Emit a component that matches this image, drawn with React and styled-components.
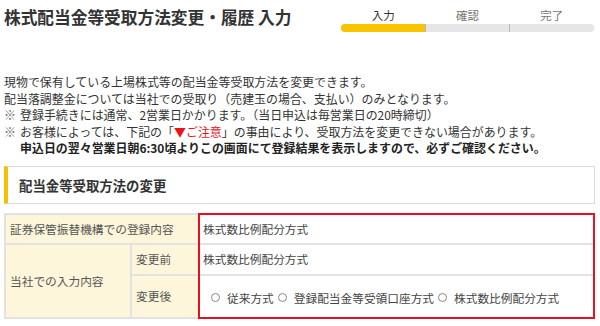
import styled, { createGlobalStyle } from "styled-components";

const GlobalStyle = createGlobalStyle`
    body{
        margin: 0;
        background: #fff;
        font-family: "Noto Sans CJK JP", "Noto Sans", sans-serif;
        color: #333;
    }
`

const steps = ["入力", "確認", "完了"];

const choices = ["従来方式", "登録配当金等受領口座方式", "株式数比例配分方式"];

export default function App(){
    return(
        <>
            <GlobalStyle />
            <Page>
                <Header>
                    <Title>株式配当金等受取方法変更・履歴 入力</Title>
                    <Steps>
                        <StepLabels>
                            {steps.map((s, i) => (
                                <StepLabel key={s} $current={i === 0}>{s}</StepLabel>
                            ))}
                        </StepLabels>
                        <StepBar>
                            {steps.map((s, i) => (
                                <StepSeg key={s} $done={i === 0} $first={i === 0} />
                            ))}
                        </StepBar>
                    </Steps>
                </Header>

                <Intro>
                    <Line>現物で保有している上場株式等の配当金等受取方法を変更できます。</Line>
                    <Line>配当落調整金については当社での受取り（売建玉の場合、支払い）のみとなります。</Line>
                    <Note>
                        <Mark>※</Mark>
                        <span>登録手続きには通常、2営業日かかります。（当日申込は毎営業日の20時締切）</span>
                    </Note>
                    <Note>
                        <Mark>※</Mark>
                        <span>お客様によっては、下記の「<Caution>▼ご注意</Caution>」の事由により、受取方法を変更できない場合があります。</span>
                    </Note>
                    <Strong>申込日の翌々営業日朝6:30頃よりこの画面にて登録結果を表示しますので、必ずご確認ください。</Strong>
                </Intro>

                <SectionHead>配当金等受取方法の変更</SectionHead>

                <Table>
                    <Labels>
                        <LabelCell $col="1 / 3" $row="1">証券保管振替機構での登録内容</LabelCell>
                        <LabelCell $col="1" $row="2 / 4">当社での入力内容</LabelCell>
                        <LabelCell $col="2" $row="2">変更前</LabelCell>
                        <LabelCell $col="2" $row="3">変更後</LabelCell>
                    </Labels>
                    <Values>
                        <ValueRow $h={28}>株式数比例配分方式</ValueRow>
                        <ValueRow $h={31} $sep>株式数比例配分方式</ValueRow>
                        <ValueRow $h={43} $sep $pad={3}>
                            {choices.map((c, i) => (
                                <Choice key={c} $first={i === 0}>
                                    <Radio />
                                    {c}
                                </Choice>
                            ))}
                        </ValueRow>
                    </Values>
                </Table>
            </Page>
        </>
    )
}

const Page = styled.div`
    width: 600px;
    box-sizing: border-box;
    padding: 0 5px 0 4px;
`

const Header = styled.div`
    display: flex;
    justify-content: space-between;
    align-items: flex-start;
    height: 33px;
`

const Title = styled.h1`
    margin: 7px 0 0;
    font-size: 16.7px;
    line-height: 20px;
    font-weight: bold;
    color: #333;
`

const Steps = styled.div`
    width: 253px;
    margin-top: 7px;
    margin-right: 1px;
`

const StepLabels = styled.div`
    display: grid;
    grid-template-columns: repeat(3, 1fr);
    height: 17px;
`

const StepLabel = styled.span`
    text-align: center;
    font-size: 11.5px;
    line-height: 16px;
    color: ${p => p.$current ? "#333" : "#777"};
`

const StepBar = styled.div`
    display: flex;
    height: 8px;
    border-radius: 4px;
    overflow: hidden;
    background: #e6e6e6;
`

const StepSeg = styled.div`
    flex: 1;
    background: ${p => p.$done ? "#f8c400" : "#e6e6e6"};
    border-left: ${p => p.$first ? "none" : "1px solid #b8b8b8"};
`

const Intro = styled.div`
    margin-top: 41px;
    font-size: 11.95px;
    line-height: 16.5px;
    color: #333;
`

const Line = styled.div`
    white-space: nowrap;
`

const Note = styled.div`
    display: flex;
    white-space: nowrap;
`

const Mark = styled.span`
    width: 16px;
    flex: none;
    color: #666;
`

const Caution = styled.span`
    color: #e8141c;
`

const Strong = styled.div`
    padding-left: 16px;
    font-weight: bold;
    color: #222;
    white-space: nowrap;
`

const SectionHead = styled.div`
    margin-top: 9px;
    height: 38px;
    box-sizing: border-box;
    display: flex;
    align-items: center;
    padding-left: 11px;
    border: 1px solid #dcdcdc;
    border-left: 4px solid #f5c000;
    font-size: 13.4px;
    font-weight: bold;
    color: #333;
`

const Table = styled.div`
    margin-top: 9px;
    display: flex;
    align-items: flex-start;
    font-size: 11.7px;
    line-height: 16px;
`

const Labels = styled.div`
    width: 194px;
    flex: none;
    box-sizing: border-box;
    display: grid;
    grid-template-columns: 124px 66px;
    grid-template-rows: 28px 29px 41px;
    gap: 2px;
    padding: 2px 0 2px 2px;
    background: #e2e2e2;
`

const LabelCell = styled.div`
    grid-column: ${p => p.$col};
    grid-row: ${p => p.$row};
    display: flex;
    align-items: center;
    padding: 0 4px;
    background: #fdf6da;
    color: #555;
    white-space: nowrap;
    overflow: hidden;
`

const Values = styled.div`
    flex: 1;
    height: 106px;
    box-sizing: border-box;
    border: 2px solid #e8101e;
    display: flex;
    flex-direction: column;
`

const ValueRow = styled.div`
    height: ${p => p.$h}px;
    flex: none;
    box-sizing: border-box;
    display: flex;
    align-items: center;
    padding: ${p => p.$pad || 0}px 3px 0;
    border-top: ${p => p.$sep ? "2px solid #e2e2e2" : "none"};
    color: #444;
    white-space: nowrap;
`

const Choice = styled.label`
    display: inline-flex;
    align-items: center;
    margin-right: 4px;
    margin-left: ${p => p.$first ? "8px" : "0"};
`

const Radio = styled.span`
    width: 9px;
    height: 9px;
    box-sizing: border-box;
    border: 1px solid #888;
    border-radius: 50%;
    margin-right: 7px;
`
